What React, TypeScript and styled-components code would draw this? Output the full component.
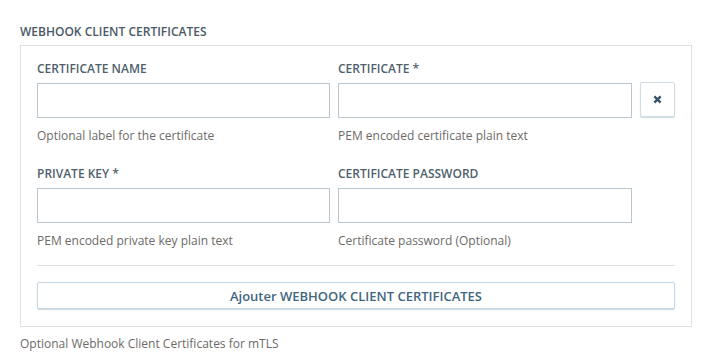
import styled, { createGlobalStyle } from "styled-components";

const GlobalStyle = createGlobalStyle`
  html, body {
    margin: 0;
    padding: 0;
    background: #ffffff;
    font-family: "Open Sans", "Liberation Sans", sans-serif;
  }
`;

const Page = styled.div`
  padding: 23px 27px 0 20px;
  width: 718px;
  box-sizing: border-box;
`;

const SectionTitle = styled.div`
  font-size: 12px;
  font-weight: 600;
  color: #4b5966;
  line-height: 18px;
  margin-bottom: 4px;
`;

const Fieldset = styled.div`
  border: 1px solid #dde1e4;
  padding: 14px 16px 17px 16px;
  width: 672px;
  box-sizing: border-box;
`;

const Row = styled.div<{ $gap: number }>`
  display: grid;
  grid-template-columns: 293px 294px 35px;
  column-gap: 8px;
  margin-bottom: ${(p) => p.$gap}px;
`;

const Field = styled.div`
  display: flex;
  flex-direction: column;
`;

const Label = styled.label`
  font-size: 12px;
  font-weight: 600;
  color: #4f5f6d;
  line-height: 18px;
  margin-bottom: 5px;
`;

const Input = styled.input`
  height: 35px;
  box-sizing: border-box;
  border: 1px solid #b9c6cd;
  border-radius: 0;
  margin: 0;
  padding: 0 8px;
  font-family: inherit;
  outline: none;
`;

const Help = styled.div`
  font-size: 12px;
  color: #6d6a68;
  line-height: 18px;
  margin-top: 9px;
`;

const IconCell = styled.div`
  padding-top: 22px;
`;

const RemoveButton = styled.button`
  width: 35px;
  height: 35px;
  box-sizing: border-box;
  border: 1px solid #cfdde6;
  border-radius: 2px;
  background: #ffffff;
  box-shadow: 0 1px 1px rgba(120, 150, 170, 0.35);
  display: flex;
  align-items: center;
  justify-content: center;
  padding: 0;
  cursor: pointer;
`;

const Divider = styled.hr`
  border: none;
  border-top: 1px solid #dde1e4;
  margin: 0 0 16px 0;
`;

const AddButton = styled.button`
  width: 100%;
  height: 27px;
  box-sizing: border-box;
  border: 1px solid #c5d7e3;
  border-radius: 2px;
  background: #ffffff;
  box-shadow: 0 1px 1px rgba(120, 150, 170, 0.35);
  font-family: inherit;
  font-size: 13px;
  font-weight: 600;
  color: #3f6680;
  padding: 0;
  cursor: pointer;
`;

const Footer = styled.div`
  font-size: 12px;
  color: #6d6a68;
  line-height: 18px;
  margin-top: 8px;
`;

const CloseIcon = () => (
  <svg width="9" height="9" viewBox="0 0 10 10">
    <path
      d="M1.5 1.5 L8.5 8.5 M8.5 1.5 L1.5 8.5"
      stroke="#35566e"
      strokeWidth="2.6"
      strokeLinecap="butt"
    />
  </svg>
);

export default function App() {
  return (
    <>
      <GlobalStyle />
      <Page>
        <SectionTitle>WEBHOOK CLIENT CERTIFICATES</SectionTitle>
        <Fieldset>
          <Row $gap={20}>
            <Field>
              <Label>CERTIFICATE NAME</Label>
              <Input type="text" />
              <Help>Optional label for the certificate</Help>
            </Field>
            <Field>
              <Label>CERTIFICATE *</Label>
              <Input type="text" />
              <Help>PEM encoded certificate plain text</Help>
            </Field>
            <IconCell>
              <RemoveButton aria-label="remove">
                <CloseIcon />
              </RemoveButton>
            </IconCell>
          </Row>
          <Row $gap={15}>
            <Field>
              <Label>PRIVATE KEY *</Label>
              <Input type="text" />
              <Help>PEM encoded private key plain text</Help>
            </Field>
            <Field>
              <Label>CERTIFICATE PASSWORD</Label>
              <Input type="password" />
              <Help>Certificate password (Optional)</Help>
            </Field>
          </Row>
          <Divider />
          <AddButton>Ajouter WEBHOOK CLIENT CERTIFICATES</AddButton>
        </Fieldset>
        <Footer>Optional Webhook Client Certificates for mTLS</Footer>
      </Page>
    </>
  );
}
